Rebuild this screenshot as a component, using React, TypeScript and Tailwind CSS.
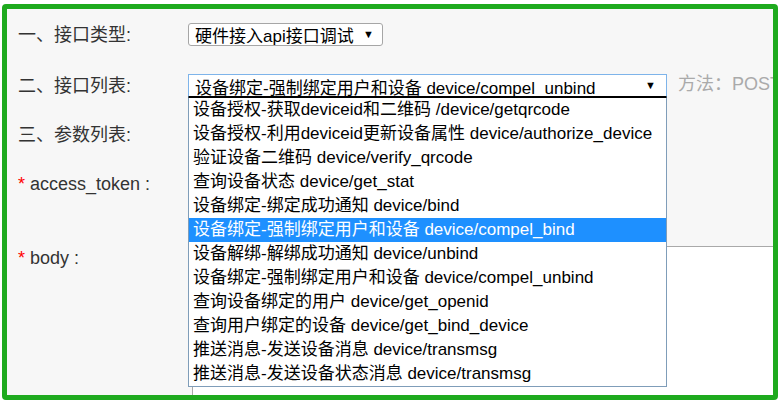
const font = { fontFamily: '"Liberation Sans", "Noto Sans CJK SC", sans-serif' };

const apis = [
  "设备授权-获取deviceid和二维码 /device/getqrcode",
  "设备授权-利用deviceid更新设备属性 device/authorize_device",
  "验证设备二维码 device/verify_qrcode",
  "查询设备状态 device/get_stat",
  "设备绑定-绑定成功通知 device/bind",
  "设备绑定-强制绑定用户和设备 device/compel_bind",
  "设备解绑-解绑成功通知 device/unbind",
  "设备绑定-强制绑定用户和设备 device/compel_unbind",
  "查询设备绑定的用户 device/get_openid",
  "查询用户绑定的设备 device/get_bind_device",
  "推送消息-发送设备消息 device/transmsg",
  "推送消息-发送设备状态消息 device/transmsg",
];

export default function App() {
  return (
    <div className="w-[780px] h-[402px] bg-white pl-[2px] pt-[4px]" style={font}>
      <div className="w-[776px] h-[396px] border-[5px] border-[#1eaa1e] rounded-[4px] bg-[#f7f7f7] overflow-hidden pl-[11px] pt-[14px] text-[18px] text-[#333]">
        {/* 一 */}
        <div className="flex items-center h-[23px]">
          <div className="w-[170px] shrink-0 leading-none">一、接口类型:</div>
          <div className="w-[195px] h-[23px] shrink-0 bg-white border border-[#a6a6a6] rounded-[3px] flex items-center pl-[6px] pr-[8px] text-[17px] text-black">
            <span className="flex-1 leading-none mt-[3px] whitespace-nowrap">硬件接入api接口调试</span>
            <span className="text-[11px] leading-none">▼</span>
          </div>
        </div>

        {/* 二 */}
        <div className="flex items-center h-[23px] mt-[28px]">
          <div className="w-[170px] shrink-0 leading-none">二、接口列表:</div>
          <div className="relative w-[479px] h-[23px] shrink-0">
            <div className="w-full h-full bg-white border border-[#7eb4ea] border-b-black flex items-center pl-[6px] pr-[10px] text-[17px] text-black">
              <span className="flex-1 leading-none mt-[5px] whitespace-nowrap">设备绑定-强制绑定用户和设备 device/compel_unbind</span>
              <span className="text-[11px] leading-none">▼</span>
            </div>
            <ul className="absolute left-0 top-[23px] w-[479px] bg-white border border-[#7f9db9] border-t-black z-10 text-[17px] text-black">
              {apis.map((a, i) => (
                <li
                  key={i}
                  className={
                    "h-[24px] flex items-center pl-[4px] whitespace-nowrap " +
                    (i === 5 ? "bg-[#1e90ff] text-white" : "")
                  }
                >
                  {a}
                </li>
              ))}
            </ul>
          </div>
          <div className="ml-[11px] text-[#aaa] leading-none whitespace-nowrap mb-[4px]">方法：POST</div>
        </div>

        {/* 三 */}
        <div className="flex items-center h-[22px] mt-[27px]">
          <div className="w-[170px] shrink-0 leading-none">三、参数列表:</div>
        </div>

        <div className="flex items-center h-[26px] mt-[25px]">
          <div className="w-[170px] shrink-0 leading-none">
            <span className="text-[#f00]">*</span> access_token :
          </div>
          <div className="ml-[4px] w-[460px] h-[26px] shrink-0 bg-white border border-[#a9a9a9]" />
        </div>

        <div className="flex items-start mt-[49px]">
          <div className="w-[170px] shrink-0 leading-[24px]">
            <span className="text-[#f00]">*</span> body :
          </div>
          <div className="ml-[4px] w-[640px] h-[200px] shrink-0 bg-white border border-[#a9a9a9]" />
        </div>
      </div>
    </div>
  );
}
